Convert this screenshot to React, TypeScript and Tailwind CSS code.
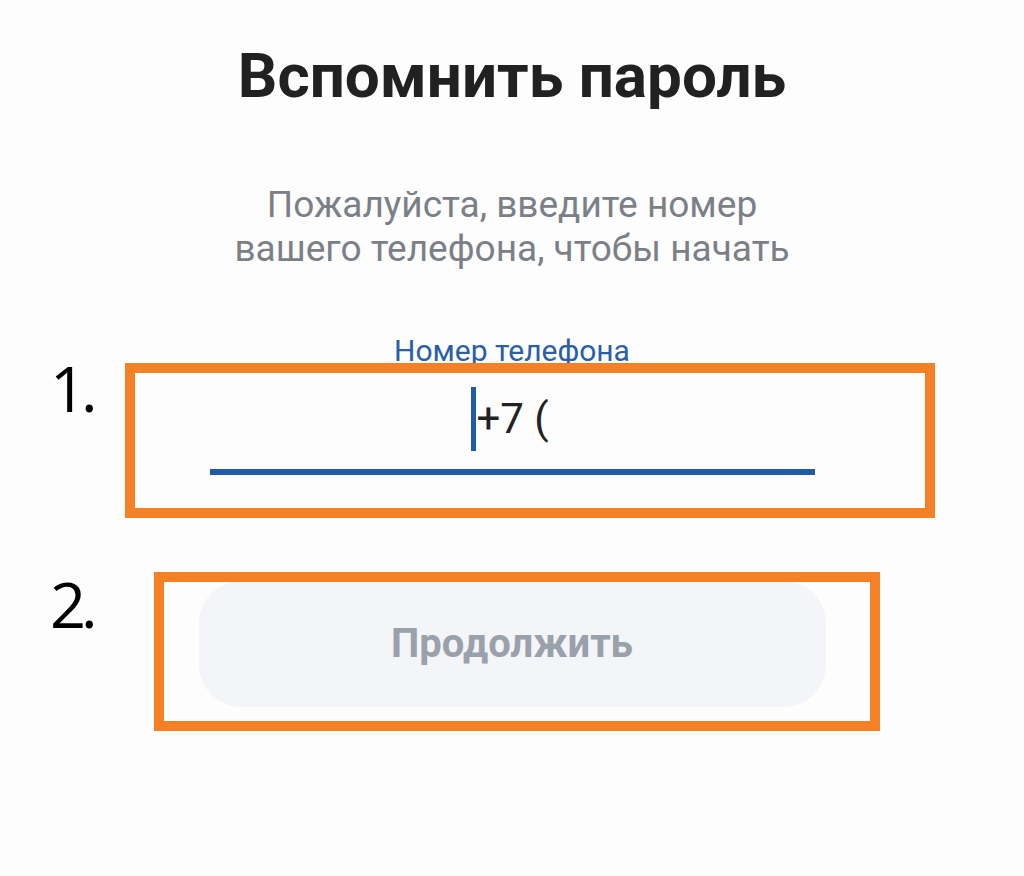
import React from 'react'

const Annotation = ({ n, box, num }: { n: string; box: string; num: string }) => {
    return (
        <>
            <div className={`absolute border-[10px] border-[#f68026] ${box}`} />
            <span className={`absolute text-[63px] leading-[63px] tracking-[-5px] text-black font-['Open_Sans',sans-serif] ${num}`}>{n}</span>
        </>
    )
}

const App = () => {
    return (
        <div className="relative w-full min-h-[876px] bg-[#fdfdfd] font-['Roboto',sans-serif] overflow-hidden">
            <div className="flex flex-col items-center">
                <h1 className="mt-[45px] text-[62px] leading-[62px] font-bold text-[#212121]">
                    Вспомнить пароль
                </h1>
                <p className="mt-[76px] text-[37px] leading-[44px] text-[#7b8087] text-center">
                    Пожалуйста, введите номер
                    <br />
                    вашего телефона, чтобы начать
                </p>

                <label className="mt-[63px] text-[30px] leading-[34px] text-[#2a5fa6]">Номер телефона</label>
                <div className="mt-[19px] w-[605px] flex justify-center pr-[4px]">
                    <span className="w-[5px] h-[64px] bg-[#1f5ba6]" />
                    <span className="text-[42px] leading-[64px] text-[#222]">+7 (</span>
                </div>
                <div className="mt-[18px] w-[605px] h-[6px] bg-[#1f5ba6]" />

                <button className="mt-[106px] w-[627px] h-[126px] rounded-[42px] bg-[#f3f5f8] text-[40px] font-bold text-[#9aa1aa]">
                    Продолжить
                </button>
            </div>

            <Annotation n="1." box="left-[125px] top-[363px] w-[810px] h-[155px]" num="left-[50px] top-[356px]" />
            <Annotation n="2." box="left-[154px] top-[572px] w-[726px] h-[159px]" num="left-[50px] top-[572px]" />
        </div>
    )
}

export default App
